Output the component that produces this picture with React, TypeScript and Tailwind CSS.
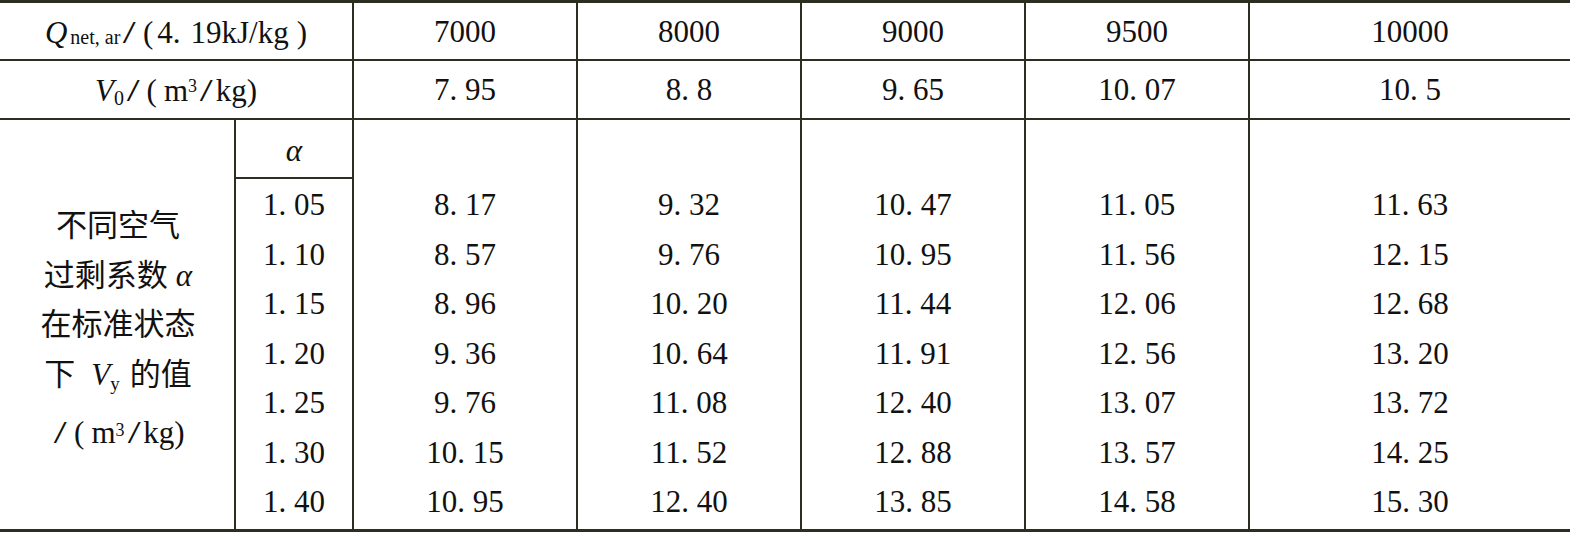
import React from "react";

const L = "border-[#2d2d20]";
const serif = { fontFamily: '"Liberation Serif", "Noto Sans CJK SC", serif' };

const alphas = ["1. 05", "1. 10", "1. 15", "1. 20", "1. 25", "1. 30", "1. 40"];
const cols: { q: string; v0: string; vals: string[] }[] = [
  { q: "7000", v0: "7. 95", vals: ["8. 17", "8. 57", "8. 96", "9. 36", "9. 76", "10. 15", "10. 95"] },
  { q: "8000", v0: "8. 8", vals: ["9. 32", "9. 76", "10. 20", "10. 64", "11. 08", "11. 52", "12. 40"] },
  { q: "9000", v0: "9. 65", vals: ["10. 47", "10. 95", "11. 44", "11. 91", "12. 40", "12. 88", "13. 85"] },
  { q: "9500", v0: "10. 07", vals: ["11. 05", "11. 56", "12. 06", "12. 56", "13. 07", "13. 57", "14. 58"] },
  { q: "10000", v0: "10. 5", vals: ["11. 63", "12. 15", "12. 68", "13. 20", "13. 72", "14. 25", "15. 30"] },
];
const widths = ["w-[224px]", "w-[224px]", "w-[224px]", "w-[224px]", "flex-1"];

function Slash() {
  return <span className="inline-block mx-[5px] scale-x-[1.5]">/</span>;
}

export default function App() {
  return (
    <div className="w-[1570px] h-[535px] bg-white text-[#111] text-[31px] leading-none" style={serif}>
      <div className={`border-t-[3px] border-b-[3px] ${L}`}>
        {/* Row 1 */}
        <div className={`flex h-[58px] border-b-2 ${L}`}>
          <div className={`w-[354px] border-r-2 ${L} flex items-center justify-center pt-[2px]`}>
            <span className="italic">Q</span>
            <span className="text-[20px] self-end mb-[12px] ml-[3px]">net, ar</span>
            <Slash />
            <span className="ml-[4px]">(</span>
            <span className="ml-[4px]">4.</span>
            <span className="ml-[10px]">19kJ/kg</span>
            <span className="ml-[8px]">)</span>
          </div>
          {cols.map((c, i) => (
            <div
              key={i}
              className={`${widths[i]} ${i < 4 ? `border-r-2 ${L}` : ""} flex items-center justify-center`}
            >
              {c.q}
            </div>
          ))}
        </div>
        {/* Row 2 */}
        <div className={`flex h-[59px] border-b-2 ${L}`}>
          <div className={`w-[354px] border-r-2 ${L} flex items-center justify-center pt-[2px]`}>
            <span className="italic">V</span>
            <span className="text-[20px] self-end mb-[10px]">0</span>
            <Slash />
            <span className="ml-[4px]">(</span>
            <span className="ml-[7px]">m</span>
            <span className="text-[18px] self-start mt-[14px]">3</span>
            <Slash />
            <span>kg)</span>
          </div>
          {cols.map((c, i) => (
            <div
              key={i}
              className={`${widths[i]} ${i < 4 ? `border-r-2 ${L}` : ""} flex items-center justify-center`}
            >
              {c.v0}
            </div>
          ))}
        </div>
        {/* Row 3 */}
        <div className="flex h-[409px]">
          <div className={`w-[236px] border-r-2 ${L} flex flex-col items-center justify-center pl-[2px]`}>
            <div className="h-[49.5px] flex items-center">不同空气</div>
            <div className="h-[49.5px] flex items-center">
              过剩系数<span className="italic ml-[8px]">α</span>
            </div>
            <div className="h-[49.5px] flex items-center">在标准状态</div>
            <div className="h-[49.5px] flex items-center">
              下<span className="italic ml-[16px]">V</span>
              <span className="text-[19px] self-end mb-[6px]">y</span>
              <span className="ml-[10px]">的值</span>
            </div>
            <div className="h-[49.5px] flex items-center pt-[18px]">
              <Slash />
              <span className="ml-[4px]">(</span>
              <span className="ml-[7px]">m</span>
              <span className="text-[18px] self-start mt-[4px]">3</span>
              <Slash />
              <span>kg)</span>
            </div>
          </div>
          <div className={`w-[118px] border-r-2 ${L} flex flex-col`}>
            <div className={`h-[59px] border-b-2 ${L} flex items-center justify-center italic pt-[4px]`}>α</div>
            {alphas.map((a) => (
              <div key={a} className="h-[49.5px] flex items-center justify-center pt-[2px]">
                {a}
              </div>
            ))}
          </div>
          {cols.map((c, i) => (
            <div
              key={i}
              className={`${widths[i]} ${i < 4 ? `border-r-2 ${L}` : ""} flex flex-col pt-[59px]`}
            >
              {c.vals.map((v, j) => (
                <div key={j} className="h-[49.5px] flex items-center justify-center pt-[2px]">
                  {v}
                </div>
              ))}
            </div>
          ))}
        </div>
      </div>
    </div>
  );
}
